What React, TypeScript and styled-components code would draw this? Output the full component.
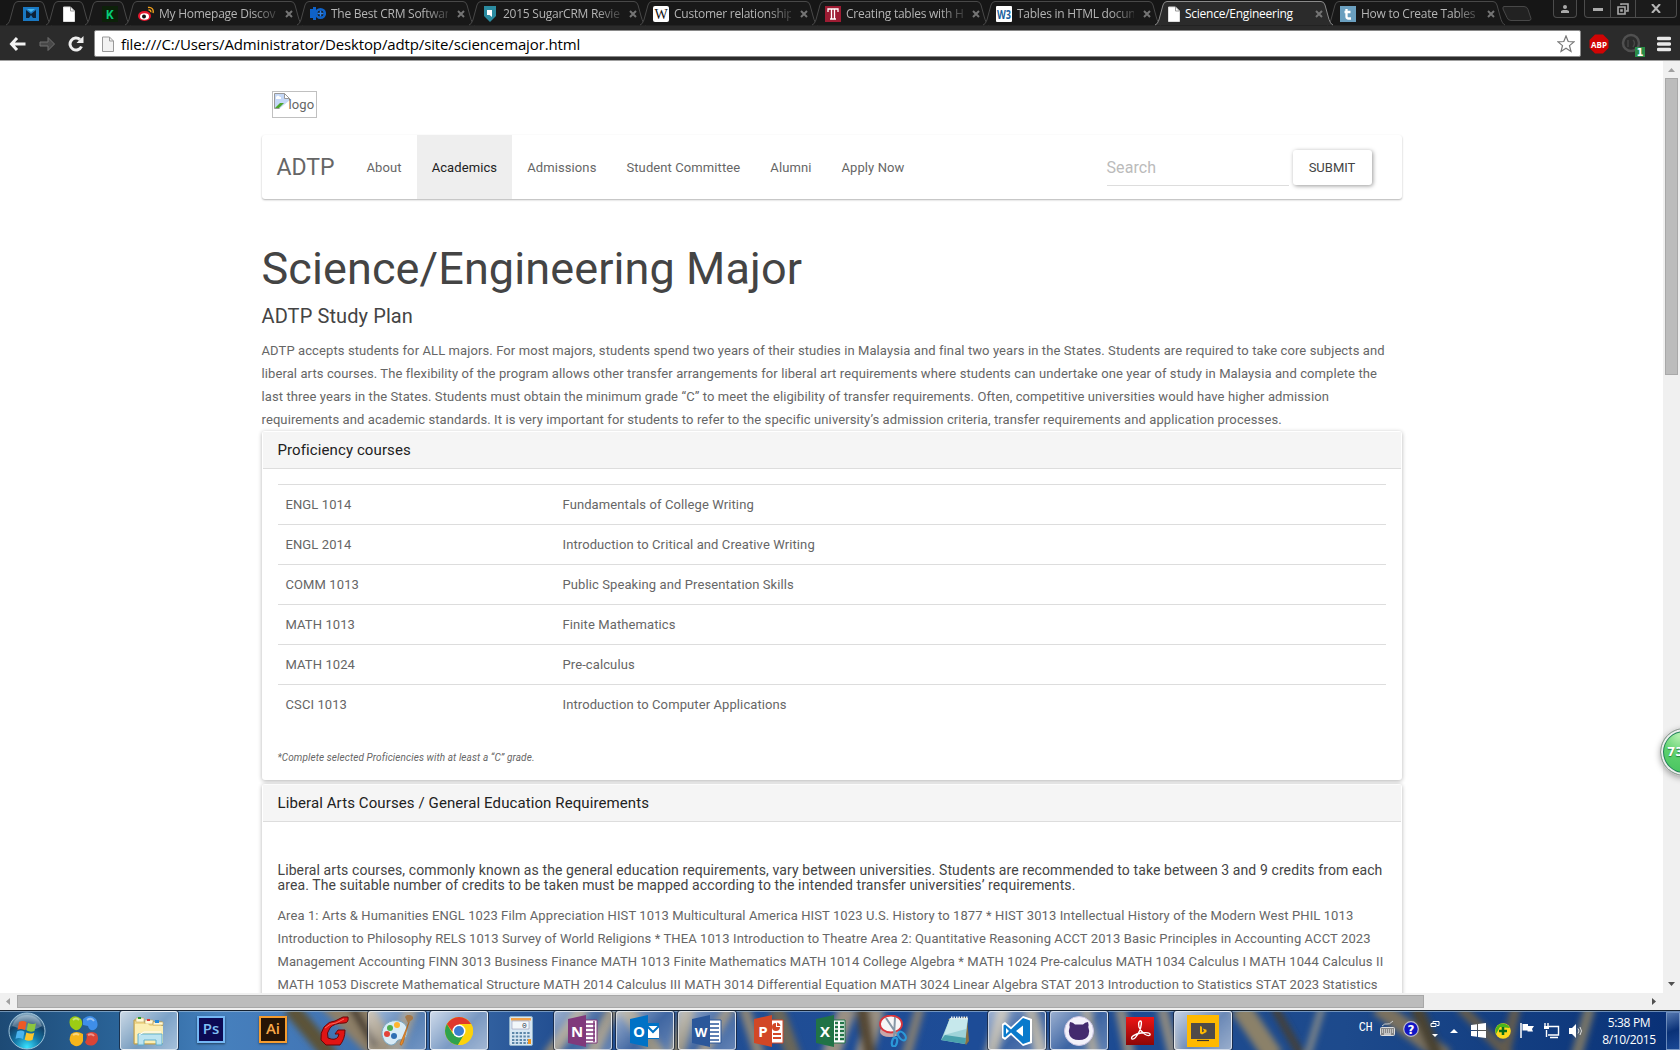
import React from "react";
import styled, { createGlobalStyle, css } from "styled-components";

const ui = `"Open Sans", "Noto Sans", sans-serif`;

const GlobalStyle = createGlobalStyle`
  * { box-sizing: border-box; }
  body { margin: 0; overflow: hidden; background: #fff; }
  svg { display: block; }
`;

const Desktop = styled.div`
  width: 1680px;
  height: 1050px;
  display: flex;
  flex-direction: column;
  overflow: hidden;
  position: relative;
  font-family: Roboto, sans-serif;
`;

/* ---------- browser frame ---------- */

const TabStrip = styled.div`
  height: 25px;
  flex: none;
  display: flex;
  background: #161616;
  padding-left: 8px;
`;

const TabBox = styled.div<{ $w: number; $active?: boolean }>`
  width: ${(p) => p.$w}px;
  height: 25px;
  flex: none;
  position: relative;
  display: flex;
  align-items: center;
  padding: 2px 0 0 ${(p) => (p.$w < 60 ? 15 : 11)}px;
  gap: 5px;
  z-index: ${(p) => (p.$active ? 2 : 1)};
  font-family: ${ui};
  font-size: 12px;
  color: ${(p) => (p.$active ? "#fff" : "#b4b4b4")};
  & > * { position: relative; flex: none; }
`;

const TabShape = styled.svg`
  && { position: absolute; left: -1px; top: 0; overflow: visible; }
`;

const TabTitle = styled.span<{ $w: number; $ls: number; $fade: boolean }>`
  width: ${(p) => p.$w}px;
  overflow: hidden;
  white-space: nowrap;
  line-height: 18px;
  letter-spacing: ${(p) => p.$ls}px;
  ${(p) => p.$fade && css`mask-image: linear-gradient(90deg, #000 80%, rgba(0, 0, 0, 0.25));`}
`;

const TabClose = styled.svg`
  margin-left: 4px;
`;

const WindowButtons = styled.div<{ $ml: number }>`
  display: flex;
  height: 18px;
  margin-left: ${(p) => p.$ml}px;
  border: 1px solid #4c4c4c;
  border-top: 0;
  border-radius: 0 0 4px 4px;
  background: #1b1b1b;
`;

const WindowButton = styled.div<{ $w: number }>`
  width: ${(p) => p.$w}px;
  display: flex;
  justify-content: center;
  align-items: center;
  & + & { border-left: 1px solid #4c4c4c; }
`;

const Toolbar = styled.div`
  height: 36px;
  flex: none;
  display: flex;
  align-items: center;
  background: #2b2b2b;
  border-top: 1px solid #222;
  border-bottom: 1px solid #a0a0a0;
  padding: 1px 8px 0 9px;
`;

const NavIcon = styled.svg<{ $mr: number }>`
  margin-right: ${(p) => p.$mr}px;
  flex: none;
`;

const Omnibox = styled.div`
  width: 1487px;
  height: 27px;
  flex: none;
  display: flex;
  align-items: center;
  background: #fff;
  border: 1px solid #8a8a8a;
  border-radius: 2px;
  padding: 0 5px 0 7px;
  gap: 7px;
`;

const Url = styled.span`
  flex: 1;
  font: 15px/24px ${ui};
  letter-spacing: -0.13px;
  color: #000;
`;

const Extension = styled.div<{ $ml: number }>`
  margin-left: ${(p) => p.$ml}px;
  flex: none;
`;

/* ---------- viewport ---------- */

const ViewRow = styled.div`
  height: 932px;
  flex: none;
  display: flex;
`;

const Page = styled.main`
  width: 1663px;
  height: 932px;
  overflow: hidden;
  background: #fff;
  font-size: 13px;
  line-height: 23px;
  letter-spacing: 0.1px;
  color: #666;
`;

const Container = styled.div`
  width: 1140px;
  margin: 0 auto;
  padding-top: 30px;
`;

const BrokenImage = styled.div`
  width: 45px;
  height: 27px;
  margin-left: 10px;
  border: 1px solid #c0c0c0;
  display: flex;
  padding: 1px;
  overflow: hidden;
  span { line-height: 23px; margin-left: -1px; }
`;

const Navbar = styled.nav`
  height: 64px;
  margin-top: 17px;
  display: flex;
  align-items: stretch;
  border-radius: 3px;
  box-shadow: 0 1px 2px rgba(0, 0, 0, 0.3);
  padding-left: 15px;
  line-height: 65px;
`;

const Brand = styled.span`
  font-size: 23px;
  width: 75px;
  letter-spacing: 0;
`;

const NavLink = styled.span<{ $active?: boolean }>`
  padding: 0 15px;
  ${(p) => p.$active && css`background: #eee; color: #212121;`}
`;

const SearchForm = styled.form`
  display: flex;
  margin: 14px 30px 0 auto;
  gap: 4px;
`;

const SearchInput = styled.div`
  width: 182px;
  height: 37px;
  line-height: 38px;
  font-size: 16px;
  color: #bbb;
  box-shadow: inset 0 -1px 0 #ddd;
`;

const SubmitButton = styled.div`
  width: 79px;
  height: 35px;
  margin-top: 1px;
  line-height: 35px;
  text-align: center;
  color: #444;
  border-radius: 3px;
  letter-spacing: 0;
  box-shadow: 1px 1px 4px rgba(0, 0, 0, 0.4);
`;

const Title = styled.h1`
  margin: 45px 0 0;
  font-weight: 400;
  font-size: 45px;
  line-height: 50px;
  letter-spacing: 0.1px;
  color: #444;
`;

const Subtitle = styled.h2`
  margin: 11px 0 0;
  font-weight: 400;
  font-size: 20px;
  line-height: 23px;
  color: #444;
`;

const Lines = styled.p<{ $mt: number }>`
  margin: ${(p) => p.$mt}px 0 0;
  white-space: pre;
`;

const Panel = styled.section<{ $h: number; $mb: number }>`
  height: ${(p) => p.$h}px;
  margin-bottom: ${(p) => p.$mb}px;
  border: 1px solid transparent;
  border-radius: 3px;
  box-shadow: 0 1px 4px rgba(0, 0, 0, 0.3);
`;

const PanelHead = styled.h3`
  margin: 0;
  height: 37px;
  padding-left: 15px;
  background: #f5f5f5;
  border-bottom: 1px solid #ddd;
  font-size: 15px;
  font-weight: 400;
  line-height: 36px;
  color: #212121;
`;

const PanelBody = styled.div`
  padding: 15px;
`;

const Table = styled.table`
  width: 100%;
  table-layout: fixed;
  border-collapse: collapse;
  margin-bottom: 24px;
  td { border-top: 1px solid #ddd; padding: 8px; height: 40px; line-height: 23px; }
  td:first-child { width: 25%; }
`;

const Note = styled.em`
  display: block;
  font-size: 10px;
  line-height: 18px;
`;

const Lead = styled.p`
  margin: 26px 0 11px;
  font-size: 14px;
  line-height: 15px;
  color: #444;
  white-space: pre;
`;

const VScroll = styled.div`
  width: 17px;
  background: #f0f0f0;
  display: flex;
  flex-direction: column;
  align-items: center;
`;

const VThumb = styled.div`
  width: 13px;
  height: 297px;
  margin-bottom: auto;
  background: #bcbcbc;
  border: 1px solid #a8a8a8;
`;

const HScroll = styled.div`
  height: 17px;
  flex: none;
  background: #f0f0f0;
  display: flex;
  align-items: center;
`;

const HThumb = styled.div`
  width: 1407px;
  height: 13px;
  background: #bcbcbc;
  border: 1px solid #a8a8a8;
`;

const Arrow = styled.svg<{ $m: string }>`
  flex: none;
  margin: ${(p) => p.$m};
`;

const SpeedBall = styled.div`
  position: absolute;
  left: 1660px;
  top: 728px;
  width: 48px;
  height: 48px;
  border-radius: 50%;
  border: 1px solid #999;
  background: radial-gradient(circle at 40% 15%, #b5efb0 0, #5bd06c 40%, #3fbd5a 100%);
  box-shadow: inset 0 0 0 2px #eee, inset 0 0 0 3px #23805a, 0 2px 6px rgba(0, 0, 0, 0.35);
  color: #fff;
  font: bold 12px/46px "DejaVu Sans", sans-serif;
  padding-left: 6px;
  text-shadow: 0 1px 1px #267a3c;
`;

/* ---------- taskbar ---------- */

const Taskbar = styled.div`
  height: 40px;
  flex: none;
  position: relative;
  display: flex;
  background: #24518f;
  overflow: hidden;
  border-top: 1px solid #14202e;
  & > * { position: relative; flex: none; }
`;

const Wallpaper = styled.svg`
  && { position: absolute; left: 0; top: 0; }
`;

const Start = styled.div`
  width: 58px;
  padding: 1px 0 0 8px;
`;

const Slot = styled.div<{ $open?: boolean; $bright?: boolean; $shift?: number }>`
  width: 58px;
  height: 39px;
  margin-right: 4px;
  display: flex;
  align-items: center;
  justify-content: center;
  padding-right: ${(p) => p.$shift || 0}px;
  border: 1px solid transparent;
  ${(p) =>
    p.$open &&
    css`
      border-color: rgba(255, 255, 255, 0.65);
      border-radius: 3px;
      box-shadow: 0 0 0 1px rgba(20, 30, 50, 0.7);
      background: ${p.$bright
        ? "linear-gradient(135deg, rgba(255,255,255,.75), rgba(255,255,255,.35) 55%, rgba(255,255,255,.55))"
        : "linear-gradient(135deg, rgba(255,255,255,.55), rgba(255,255,255,.14) 55%, rgba(255,255,255,.3))"};
    `}
`;

const AdobeTile = styled.div<{ $edge: string; $bg: string; $fg: string }>`
  width: 28px;
  height: 27px;
  border: 2px solid ${(p) => p.$edge};
  background: ${(p) => p.$bg};
  color: ${(p) => p.$fg};
  font: 600 15px/21px ${ui};
  text-align: center;
  margin-bottom: 3px;
  box-shadow: 0 1px 2px rgba(0, 0, 0, 0.5);
`;

const Tray = styled.div`
  display: flex;
  align-items: center;
  margin-left: auto;
  height: 39px;
  color: #fff;
`;

const Lang = styled.span`
  font: 12px/14px "Liberation Mono", monospace;
  letter-spacing: -0.6px;
  margin: 0 8px 5px 0;
`;

const TrayIcon = styled.svg<{ $mr: number; $mb?: number }>`
  margin-right: ${(p) => p.$mr}px;
  margin-bottom: ${(p) => p.$mb || 0}px;
  overflow: visible;
`;

const Clock = styled.div`
  width: 60px;
  font: 12px/17px ${ui};
  letter-spacing: -0.35px;
  text-align: center;
  margin-right: 7px;
  white-space: nowrap;
`;

const ShowDesktop = styled.div`
  width: 14px;
  height: 38px;
  border: 1px solid rgba(160, 185, 220, 0.6);
  background: linear-gradient(160deg, rgba(160, 190, 230, 0.5), rgba(10, 50, 120, 0.5) 50%, rgba(40, 90, 170, 0.6));
`;

/* ---------- drawings ---------- */

const PageGlyph = ({ dim }: { dim?: boolean }) => (
  <svg width="12" height="16" viewBox="0 0 12 16">
    <path d="M.5 1h7L11.500 5v10.500H.5z" fill={dim ? "#f2f2f2" : "#fff"} stroke={dim ? "#999" : "#ddd"} />
    <path d="M7.500 1v4h4" fill="none" stroke="#999" />
  </svg>
);

const Favicon = ({ kind }: { kind: string }) => {
  if (kind === "file") return <PageGlyph />;
  return (
    <svg width="16" height="16" viewBox="0 0 16 16">
      {kind === "m" && (
        <>
          <path d="M0 1h16v14H0z" fill="#1a78c2" />
          <path d="M3 4l5 4 5-4v8H10l-2-3-2 3H3z" fill="#0d2137" />
          <path d="M4 3h8L8 6z" fill="#49b8ee" />
        </>
      )}
      {kind === "k" && (
        <>
          <path d="M0 0h16v16H0z" fill="#0c2109" />
          <text x="4" y="12.500" fontSize="12" fontWeight="bold" fontFamily="Roboto" fill="#05ce78">K</text>
        </>
      )}
      {kind === "weibo" && (
        <>
          <ellipse cx="6.500" cy="10" rx="6.500" ry="5" fill="#e6162d" />
          <ellipse cx="6.500" cy="10.500" rx="4.500" ry="3.300" fill="#fff" />
          <circle cx="6" cy="10.500" r="2" fill="#111" />
          <path d="M10 1.500c3.500-.8 6 2 5 5.500M10.500 4c1.600-.3 2.600.8 2.200 2.300" fill="none" stroke="#f5a21b" strokeWidth="1.400" />
        </>
      )}
      {kind === "ten" && (
        <>
          <path d="M0 3h3v9h-3zM3 1h3v13H3z" fill="#0f62c8" />
          <circle cx="10.500" cy="7.500" r="4.300" fill="none" stroke="#0f62c8" strokeWidth="2.600" />
          <path d="M10.500 4.500v6M7.500 7.500h6" stroke="#2f82e8" strokeWidth="1.500" />
        </>
      )}
      {kind === "shield" && (
        <>
          <path d="M2 0h12v10l-6 6-6-6z" fill="#2b8ba0" />
          <path d="M5 4h5v7L7.500 9H5z" fill="#fff" />
        </>
      )}
      {kind === "wiki" && (
        <>
          <rect width="16" height="16" rx="2" fill="#fff" />
          <text x="8" y="13" fontSize="14" textAnchor="middle" fontFamily="Liberation Serif" fill="#111">W</text>
        </>
      )}
      {kind === "temple" && (
        <>
          <path d="M0 0h16v16H0z" fill="#9d1c33" />
          <path d="M3 6V3h10v3M6.500 3.500v9M9.500 3.500v9M5 13h6" fill="none" stroke="#fff" strokeWidth="1.300" />
        </>
      )}
      {kind === "w3" && (
        <>
          <rect width="16" height="16" rx="1" fill="#fff" />
          <text x="8" y="12.500" fontSize="12" textAnchor="middle" fontWeight="bold" fontFamily="Open Sans" textLength="14" lengthAdjust="spacingAndGlyphs" fill="#1b5f9e">W3</text>
        </>
      )}
      {kind === "t" && (
        <>
          <path d="M0 0h16v16H0z" fill="#6a9fbf" />
          <path d="M6.500 3v7.500q0 2 2 2h2.500M4.500 6h6" fill="none" stroke="#fff" strokeWidth="2.300" />
        </>
      )}
    </svg>
  );
};

type TabInfo = { w: number; icon: string; title?: string; tw?: number; ls?: number; active?: boolean };
const tabs: TabInfo[] = [
  { w: 40, icon: "m" },
  { w: 39, icon: "file" },
  { w: 40, icon: "k" },
  { w: 172, icon: "weibo", title: "My Homepage Discov" },
  { w: 172, icon: "ten", title: "The Best CRM Softwar" },
  { w: 171, icon: "shield", title: "2015 SugarCRM Revie" },
  { w: 172, icon: "wiki", title: "Customer relationship" },
  { w: 171, icon: "temple", title: "Creating tables with H" },
  { w: 172, icon: "w3", title: "Tables in HTML docun" },
  { w: 172, icon: "file", title: "Science/Engineering", active: true },
  { w: 172, icon: "t", title: "How to Create Tables" },
];

const Tab = ({ t }: { t: TabInfo }) => (
  <TabBox $w={t.w} $active={t.active}>
    <TabShape width={t.w + 5} height="26">
      <path
        d={`M-1 25C2 24 3 20 4 16L7 5Q8 1.500 11 1.500H${t.w - 7}Q${t.w - 4} 1.500 ${t.w - 3} 5L${t.w} 16Q${t.w + 2} 24 ${t.w + 5} 25`}
        fill={t.active ? "#2b2b2b" : "#181818"}
        stroke={t.active ? "#8a8a8a" : "#484848"}
      />
    </TabShape>
    <Favicon kind={t.icon} />
    {t.title && (
      <>
        <TabTitle $w={t.icon === "file" ? 121 : 117} $ls={-0.25} $fade={!t.active}>{t.title}</TabTitle>
        <TabClose width="8" height="8" viewBox="0 0 8 8">
          <path d="M1 1l6 6M7 1L1 7" stroke="#747474" strokeWidth="2" />
        </TabClose>
      </>
    )}
  </TabBox>
);

const officeColors: Record<string, string> = { N: "#80397b", O: "#0072c6", W: "#2b579a", P: "#d24726", X: "#217346" };

const Office = ({ letter }: { letter: string }) => {
  const c = officeColors[letter];
  return (
    <svg width="30" height="32" viewBox="0 0 30 32">
      {letter === "O" ? (
        <>
          <path d="M16 8h13v16H16z" fill="#0072c6" />
          <path d="M17 11h12v12H17z" fill="#fff" />
          <path d="M17 11l6 6 6-6" fill="none" stroke="#0072c6" strokeWidth="2" />
        </>
      ) : (
        <>
          <path d="M16 5h13v23H16z" fill="#fff" stroke={c} />
          {letter === "X" ? (
            <path d="M19 8h3M24 8h4M19 12h3M24 12h4M19 16h3M24 16h4M19 20h3M24 20h4M19 24h3M24 24h4" stroke={c} strokeWidth="2.500" />
          ) : letter === "P" ? (
            <>
              <circle cx="22" cy="12" r="4" fill={c} />
              <path d="M22 12V7h5v5z" fill="#fff" />
              <path d="M23 11V7.500q3 .5 3.500 3.500z" fill={c} />
              <path d="M19 19h8M19 23h8" stroke={c} strokeWidth="1.800" />
            </>
          ) : (
            <path d="M18 9h9M18 13h9M18 17h9M18 21h9M18 25h9" stroke={c} strokeWidth="1.600" />
          )}
          {letter === "N" && <path d="M26 6v21" stroke={c} strokeWidth="1.500" />}
        </>
      )}
      <path d="M0 4l18-4v32L0 28z" fill={c} />
      <text x="9" y="21.500" textAnchor="middle" fontFamily="Open Sans" fontWeight="bold" fontSize={letter === "W" ? 13 : 15} fill="#fff">{letter}</text>
    </svg>
  );
};

const StartOrb = () => (
  <svg width="38" height="38" viewBox="0 0 38 38">
    <defs>
      <radialGradient id="orb" cx=".5" cy=".95" r=".9">
        <stop offset="0" stopColor="#39e3ff" />
        <stop offset=".4" stopColor="#1478a8" />
        <stop offset=".75" stopColor="#123f66" />
        <stop offset="1" stopColor="#7ea3bd" />
      </radialGradient>
    </defs>
    <circle cx="19" cy="19" r="18" fill="url(#orb)" stroke="#9fc4da" />
    <path d="M4 14Q8 3 19 3t15 11Q26 19 19 18T4 14z" fill="#fff" opacity=".28" />
    <path d="M11 10q4-2 7.500.3L17 18q-4-2-7.500-.3z" fill="#ee5a24" />
    <path d="M20 11q4 2 8 .2L26.500 19q-4 1.500-7.800-.4z" fill="#8cc63f" />
    <path d="M9 19.500q4-2 7.500.2L15 27q-4-2-7.500-.3z" fill="#4ab4ee" />
    <path d="M18.300 20.500q4 2 8 .2L24.500 28q-4 1.800-7.800-.3z" fill="#fbc52c" />
  </svg>
);

const Balls = () => (
  <svg width="30" height="32" viewBox="0 0 30 32">
    <path d="M1 4Q4 0 9 2t4 8q-2 6-7 5Q-1 12 1 4z" fill="#9ccc14" />
    <path d="M14 4q7-6 13 0 4 8-2 11-5 1-6-4l-5-1z" fill="#3f8ee8" />
    <path d="M2 19q5-4 12 0v7q-2 6-8 5-8-3-4-12z" fill="#f5b51b" />
    <path d="M17 19q6-4 11 0 3 7-3 11-7 2-9-3 3-4 1-8z" fill="#d94436" />
    <path d="M4 5q3-3 6 0M18 5q4-3 7 1M4 20q3-2 6 0M19 20q4-2 6 1" stroke="#fff" opacity=".45" strokeWidth="2" fill="none" />
  </svg>
);

const Explorer = () => (
  <svg width="34" height="32" viewBox="0 0 34 32">
    <path d="M2 5h8l2 2h18v22H2z" fill="#f0d78a" stroke="#b99a48" />
    <path d="M4 3h8v4H4zM13 5h8v4h-8zM21 7h10v3H21z" fill="#fff8d8" stroke="#c2a95c" strokeWidth=".6" />
    <path d="M6 2h3v2H6z" fill="#2b9a2b" /><path d="M15 4h3v2h-3z" fill="#d33" /><path d="M23 5h4v3h-4z" fill="#2588d9" />
    <path d="M3 9h13l2 2h13v17H3z" fill="#fbeeb4" />
    <path d="M6 19h24v11h-6v-5H12v5H6z" fill="#b9e4f5" stroke="#5aaed0" opacity=".95" />
    <path d="M7 20l5-3h17" stroke="#fff" fill="none" />
  </svg>
);

const GIcon = () => (
  <svg width="30" height="32" viewBox="0 0 30 32">
    <path d="M4 12Q9 6 15 6l8-4h5q1 6-4 6-10 0-14 5-4 5-2 10 7 3 10-1l1-3h-4l3-4h7q0 9-5 15H6L1 25q-1-7 3-13z" fill="#e01414" stroke="#6b0505" />
    <path d="M5 13q5-5 11-5l8-4" stroke="#ff6a5a" fill="none" />
  </svg>
);

const Paint = () => (
  <svg width="32" height="32" viewBox="0 0 32 32">
    <path d="M1 20C0 10 9 4 18 6c8 2 10 9 7 16-2 4-6 1-9 4-2 4-6 5-9 3-3-1-5-5-6-9z" fill="#d8ebf6" stroke="#7aa8c4" />
    <circle cx="9" cy="13" r="3" fill="#4caf50" /><circle cx="16" cy="10" r="3" fill="#ffb52e" />
    <circle cx="6" cy="19" r="3" fill="#e3433a" /><circle cx="13" cy="21" r="3" fill="#2f6fb4" />
    <path d="M28 7l-6 21q-2 4-3 1z" fill="#e88a2a" stroke="#a85a10" strokeWidth=".6" />
    <path d="M24 2q2-3 5-2 4 1 3 4l-5 4z" fill="#a5794a" />
  </svg>
);

const ChromeIcon = () => (
  <svg width="30" height="30" viewBox="0 0 30 30">
    <circle cx="15" cy="15" r="14" fill="#fcd20b" />
    <path d="M2.900 8A14 14 0 0 1 27.100 8L15 8z" fill="#e0382c" />
    <path d="M2.900 8A14 14 0 0 0 14 29l6.500-11L9 18z" fill="#2fa24c" />
    <path d="M2.900 8h12.100v7H8z" fill="#e0382c" />
    <path d="M27.100 8A14 14 0 0 1 14 29l7-12V8z" fill="#fcd20b" />
    <circle cx="15" cy="15" r="6.500" fill="#fff" /><circle cx="15" cy="15" r="5" fill="#3b7ed0" />
  </svg>
);

const Calculator = () => (
  <svg width="24" height="30" viewBox="0 0 24 30">
    <rect x=".5" y=".5" width="23" height="29" rx="1.500" fill="#d6e6f2" stroke="#8fb0c8" />
    <path d="M2 2h20v2.500H2z" fill="#efa14a" />
    <path d="M3 5h17v8H3z" fill="#f2f7fa" stroke="#88a" strokeWidth=".5" />
    <text x="13" y="12" fontFamily="Liberation Mono" fontSize="8" fill="#345">0</text>
    <path d="M3 17h18M3 20.500h18M3 24h18M3 27h18" stroke="#5b86a8" strokeWidth="2.200" strokeDasharray="2.400 1.400" />
    <path d="M19 23h3v5h-3z" fill="#f0961e" />
  </svg>
);

const Snip = () => (
  <svg width="30" height="32" viewBox="0 0 30 32">
    <path d="M2 17q0-5 6-6l14 6q-2 5-10 5-9 0-10-5z" fill="#c9a6a8" />
    <ellipse cx="13" cy="9" rx="11" ry="8.500" fill="#f7f7f7" stroke="#d8353c" strokeWidth="1.800" />
    <path d="M8 3l12 18M17 2l-1 20" stroke="#8797a5" strokeWidth="2" />
    <ellipse cx="24" cy="21" rx="3" ry="5" fill="none" stroke="#2b98d8" strokeWidth="2.200" transform="rotate(-38 24 21)" />
    <ellipse cx="16.500" cy="27" rx="2.500" ry="4.500" fill="none" stroke="#2b98d8" strokeWidth="2.200" transform="rotate(12 16.500 27)" />
  </svg>
);

const Notepad = () => (
  <svg width="30" height="32" viewBox="0 0 30 32">
    <path d="M8 4l19-2 2 24-3 4z" fill="#8a7040" />
    <path d="M10 3h18l-3 26L1 25z" fill="#9fd3d9" />
    <path d="M10 3h18L26 14 4 20z" fill="#c6e8ec" />
    <path d="M5 20l21 3-1 6-24-4z" fill="#4aa2ad" />
    <path d="M11 3h17" stroke="#e8eef0" strokeWidth="3" strokeDasharray="1.500 1" />
  </svg>
);

const VSCode = () => (
  <svg width="32" height="32" viewBox="0 0 32 32">
    <path d="M22 1l9 3v24l-9 3L10 20l-6 5-3-2V9l3-2 6 5z" fill="#fff" />
    <path d="M22 3l7 2.500v21L22 29 10 17.500 4 22.500l-1.500-1V10.500L4 9.500l6 5zM22 10.500L15 16l7 5.500zM5 13v6l3-3z" fill="#0a7acc" fillRule="evenodd" />
  </svg>
);

const GitHub = () => (
  <svg width="30" height="32" viewBox="0 0 30 32">
    <circle cx="15" cy="16" r="14.500" fill="#f3f1fa" stroke="#c9c4e2" />
    <path d="M6 7q3 0 5 2.500h8Q21 7 24 7q1 3 .3 5 1.700 4 .2 8-2 5-9.500 5t-9.500-5q-1.500-4 .2-8Q5 10 6 7z" fill="#432a6e" />
  </svg>
);

const Acrobat = () => (
  <svg width="28" height="28" viewBox="0 0 28 28">
    <defs><linearGradient id="acro" x1="0" y1="0" x2="0" y2="1"><stop offset="0" stopColor="#ee1414" /><stop offset="1" stopColor="#8c0606" /></linearGradient></defs>
    <path d="M0 0h28v28H0z" fill="url(#acro)" />
    <path d="M6 22c-2-2 3-5 9-6 6-1 10 0 9 2-2 2-9-2-11-8-1-4 0-6 1.500-6s1 5-1 10c-2 4-5 9-7.500 8z" fill="none" stroke="#fff" strokeWidth="1.400" />
  </svg>
);

const BingDesktop = () => (
  <svg width="32" height="32" viewBox="0 0 32 32">
    <path d="M0 0h32v32H0z" fill="#ffb900" />
    <path d="M4 8h24v16H4z" fill="#4f4a48" />
    <path d="M10 25.500h12" stroke="#3a3430" strokeWidth="1.200" />
    <path d="M13 11l2 .7v5.500l2.200-1-1.500-2.800 3.800 1.400V17L15 19.500l-2-1.200z" fill="#ffb900" />
  </svg>
);

const Scene = () => (
  <Wallpaper width="1680" height="40" viewBox="0 0 1680 40" preserveAspectRatio="none">
    <defs>
      <linearGradient id="sky">
        <stop offset="0" stopColor="#1d4a75" /><stop offset=".08" stopColor="#2c679d" />
        <stop offset=".13" stopColor="#4680bd" /><stop offset=".19" stopColor="#4276b6" />
        <stop offset=".29" stopColor="#31609f" /><stop offset=".33" stopColor="#234f92" />
        <stop offset=".58" stopColor="#1d4c97" /><stop offset=".8" stopColor="#1d4a8c" />
        <stop offset=".95" stopColor="#0e387c" /><stop offset="1" stopColor="#082f76" />
      </linearGradient>
      <filter id="soft" x="-5%" y="-50%" width="110%" height="200%"><feGaussianBlur stdDeviation="3" /></filter>
    </defs>
    <path d="M0 0h1680v40H0z" fill="url(#sky)" />
    <g filter="url(#soft)" fill="none">
      <path d="M290-4l42 50" stroke="#5c5238" strokeWidth="16" />
      <path d="M318-6h54l34 54h-34z" fill="#8d7f68" />
      <path d="M352-4l24 40" stroke="#463c30" strokeWidth="8" />
      <path d="M392 46l20-50" stroke="#8d8a80" strokeWidth="14" />
      <path d="M548 46l36-50M590 46l24-50" stroke="#8b8577" strokeWidth="13" />
      <path d="M624-4l36 50M676 46l12-50" stroke="#7d7765" strokeWidth="15" />
      <path d="M700 46l30-50M744-4l16 50" stroke="#8a8478" strokeWidth="11" />
      <path d="M776-4l18 50" stroke="#6b6658" strokeWidth="15" />
      <path d="M830 46l18-50M876-4l-12 50" stroke="#999083" strokeWidth="18" />
      <path d="M862-4l8 50" stroke="#574a34" strokeWidth="13" />
      <path d="M906 46l14-50" stroke="#7f7b74" strokeWidth="10" />
      <path d="M990 46l14-50M1030-4l12 50" stroke="#9d9b94" strokeWidth="13" />
      <path d="M1094 46l-8-50M1120-4l10 50M1162-4l12 50" stroke="#8a8881" strokeWidth="11" />
      <path d="M1240-4l34 50" stroke="#8b8169" strokeWidth="20" />
      <path d="M1274-4l28 50" stroke="#443f38" strokeWidth="8" />
      <path d="M1322-4l-15 50" stroke="#7e8588" strokeWidth="7" />
      <path d="M1378-4l68 50" stroke="#7a715f" strokeWidth="17" />
      <path d="M1416-4l22 50" stroke="#4a4333" strokeWidth="13" />
      <path d="M1460-4l50 50M1504 46l12-50" stroke="#635b4d" strokeWidth="10" />
      <path d="M1576 46l14-50" stroke="#777468" strokeWidth="11" />
    </g>
    <path d="M0 .5h1680" stroke="#a9c4dd" opacity=".6" />
  </Wallpaper>
);

const courses = [
  ["ENGL 1014", "Fundamentals of College Writing"],
  ["ENGL 2014", "Introduction to Critical and Creative Writing"],
  ["COMM 1013", "Public Speaking and Presentation Skills"],
  ["MATH 1013", "Finite Mathematics"],
  ["MATH 1024", "Pre-calculus"],
  ["CSCI 1013", "Introduction to Computer Applications"],
];

const intro = [
  "ADTP accepts students for ALL majors. For most majors, students spend two years of their studies in Malaysia and final two years in the States. Students are required to take core subjects and",
  "liberal arts courses. The flexibility of the program allows other transfer arrangements for liberal art requirements where students can undertake one year of study in Malaysia and complete the",
  "last three years in the States. Students must obtain the minimum grade “C” to meet the eligibility of transfer requirements. Often, competitive universities would have higher admission",
  "requirements and academic standards. It is very important for students to refer to the specific university’s admission criteria, transfer requirements and application processes.",
].join("\n");

const lead = [
  "Liberal arts courses, commonly known as the general education requirements, vary between universities. Students are recommended to take between 3 and 9 credits from each",
  "area. The suitable number of credits to be taken must be mapped according to the intended transfer universities’ requirements.",
].join("\n");

const areas = [
  "Area 1: Arts & Humanities ENGL 1023 Film Appreciation HIST 1013 Multicultural America HIST 1023 U.S. History to 1877 * HIST 3013 Intellectual History of the Modern West PHIL 1013",
  "Introduction to Philosophy RELS 1013 Survey of World Religions * THEA 1013 Introduction to Theatre Area 2: Quantitative Reasoning ACCT 2013 Basic Principles in Accounting ACCT 2023",
  "Management Accounting FINN 3013 Business Finance MATH 1013 Finite Mathematics MATH 1014 College Algebra * MATH 1024 Pre-calculus MATH 1034 Calculus I MATH 1044 Calculus II",
  "MATH 1053 Discrete Mathematical Structure MATH 2014 Calculus III MATH 3014 Differential Equation MATH 3024 Linear Algebra STAT 2013 Introduction to Statistics STAT 2023 Statistics",
  "for Engineering STAT 2034 Probability and Statistics Area 3: Science & Technology BIOL 1013 General Biology BIOL 1033 Introduction to Cell Biology BIOL 1053 Evolution, Diversity & Ecology",
].join("\n");

export default function App() {
  return (
    <Desktop>
      <GlobalStyle />
      <TabStrip>
        {tabs.map((t, i) => <Tab key={i} t={t} />)}
        <svg width="32" height="24" viewBox="0 0 32 24">
          <path d="M3 6.500h20q3 0 4 3l3 9q0 2-2 2H10q-3 0-4-3L2 9q-.500-2.500 1-2.500z" fill="#222" stroke="#484848" />
        </svg>
        <WindowButtons $ml={20}>
          <WindowButton $w={22}>
            <svg width="8" height="10" viewBox="0 0 8 10"><circle cx="4" cy="3" r="2" fill="#aaa" /><path d="M0 9V7l2-1h4l2 1v2z" fill="#aaa" /></svg>
          </WindowButton>
        </WindowButtons>
        <WindowButtons $ml={7}>
          <WindowButton $w={25}><svg width="10" height="4"><path d="M0 1h10v3H0z" fill="#aaa" /></svg></WindowButton>
          <WindowButton $w={25}>
            <svg width="12" height="12" viewBox="0 0 12 12"><path d="M4 2V1h7v7h-2M1 4h7v7H1zM4 7h1v1H4z" fill="none" stroke="#aaa" strokeWidth="1.600" /></svg>
          </WindowButton>
          <WindowButton $w={41}><svg width="10" height="9" viewBox="0 0 10 9"><path d="M1 0l8 9M9 0L1 9" stroke="#b5b5b5" strokeWidth="2" /></svg></WindowButton>
        </WindowButtons>
      </TabStrip>

      <Toolbar>
        <NavIcon $mr={13} width="17" height="16" viewBox="0 0 17 16"><path d="M8 2L2.500 8 8 14M3 8h13.500" fill="none" stroke="#f2f2f2" strokeWidth="3" /></NavIcon>
        <NavIcon $mr={12} width="17" height="16" viewBox="0 0 17 16"><path d="M9 1.500V6H1v4h8v4.500L15.500 8z" fill="#484848" stroke="#707070" /></NavIcon>
        <NavIcon $mr={10} width="16" height="16" viewBox="0 0 16 16"><path d="M13.500 10.500A6 6 0 1 1 12 3.500" fill="none" stroke="#eee" strokeWidth="3" /><path d="M15.500 0v7H8.500z" fill="#eee" /></NavIcon>
        <Omnibox>
          <PageGlyph dim />
          <Url>file:///C:/Users/Administrator/Desktop/adtp/site/sciencemajor.html</Url>
          <svg width="18" height="18" viewBox="0 0 18 18"><path d="M9 1l2.200 5.500 5.800.4-4.500 3.700 1.500 5.900L9 13.300l-5 3.200 1.500-5.900L1 6.900l5.800-.4z" fill="#fff" stroke="#777" strokeWidth="1.200" /></svg>
        </Omnibox>
        <Extension $ml={8}>
          <svg width="20" height="20" viewBox="0 0 20 20">
            <path d="M6 .5h8L19.500 6v8L14 19.500H6L.5 14V6z" fill="#d00404" />
            <text x="10" y="13.500" textAnchor="middle" fontFamily="Open Sans" fontWeight="bold" fontSize="9" textLength="16" lengthAdjust="spacingAndGlyphs" fill="#fff">ABP</text>
          </svg>
        </Extension>
        <Extension $ml={12}>
          <svg width="25" height="28" viewBox="0 0 25 28">
            <circle cx="10" cy="13" r="8" fill="none" stroke="#505050" strokeWidth="2.500" />
            <path d="M7 10v7M12 10q3 3 0 7" stroke="#464646" fill="none" strokeWidth="1.500" />
            <path d="M14 17h10v10H14z" fill="#2a8c48" />
            <text x="19" y="26" textAnchor="middle" fontFamily="DejaVu Sans" fontWeight="bold" fontSize="10" fill="#fff">1</text>
          </svg>
        </Extension>
        <Extension $ml={11}>
          <svg width="14" height="16" viewBox="0 0 14 16"><path d="M1.500 2.500h11M1.500 8h11M1.500 13.500h11" stroke="#e8e8e8" strokeWidth="3.400" strokeLinecap="round" /></svg>
        </Extension>
      </Toolbar>

      <ViewRow>
        <Page>
          <Container>
            <BrokenImage>
              <svg width="16" height="16" viewBox="0 0 16 16">
                <path d="M.5 .5h10l5 5v10H.5z" fill="#c5d8f7" stroke="#999" />
                <path d="M10.500 .5v5h5z" fill="#fff" stroke="#999" />
                <path d="M2 4q2-3 4 0h1v2H2z" fill="#fff" />
                <path d="M1 15l5-5h4l-5 5z" fill="#4ca52e" />
                <path d="M5 16l11-9v9z" fill="#fff" />
              </svg>
              <span>logo</span>
            </BrokenImage>
            <Navbar>
              <Brand>ADTP</Brand>
              <NavLink>About</NavLink>
              <NavLink $active>Academics</NavLink>
              <NavLink>Admissions</NavLink>
              <NavLink>Student Committee</NavLink>
              <NavLink>Alumni</NavLink>
              <NavLink>Apply Now</NavLink>
              <SearchForm>
                <SearchInput>Search</SearchInput>
                <SubmitButton>SUBMIT</SubmitButton>
              </SearchForm>
            </Navbar>
            <Title>Science/Engineering Major</Title>
            <Subtitle>ADTP Study Plan</Subtitle>
            <Lines $mt={11}>{intro}</Lines>
            <Panel $h={349} $mb={4}>
              <PanelHead>Proficiency courses</PanelHead>
              <PanelBody>
                <Table>
                  <tbody>
                    {courses.map(([code, name]) => (
                      <tr key={code}><td>{code}</td><td>{name}</td></tr>
                    ))}
                  </tbody>
                </Table>
                <Note>*Complete selected Proficiencies with at least a “C” grade.</Note>
              </PanelBody>
            </Panel>
            <Panel $h={400} $mb={0}>
              <PanelHead>Liberal Arts Courses / General Education Requirements</PanelHead>
              <PanelBody>
                <Lead>{lead}</Lead>
                <Lines $mt={0}>{areas}</Lines>
              </PanelBody>
            </Panel>
          </Container>
        </Page>
        <VScroll>
          <Arrow $m="7px 0 6px" width="7" height="4"><path d="M0 4L3.500 0 7 4z" fill="#a0a0a0" /></Arrow>
          <VThumb />
          <Arrow $m="0 0 7px" width="7" height="4"><path d="M0 0h7L3.500 4z" fill="#505050" /></Arrow>
        </VScroll>
      </ViewRow>
      <HScroll>
        <Arrow $m="0 7px 0 6px" width="4" height="7"><path d="M4 0v7L0 3.500z" fill="#a0a0a0" /></Arrow>
        <HThumb />
        <Arrow $m="0 24px 0 auto" width="4" height="7"><path d="M0 0v7l4-3.500z" fill="#505050" /></Arrow>
      </HScroll>

      <Taskbar>
        <Scene />
        <Start><StartOrb /></Start>
        <Slot $shift={6}><Balls /></Slot>
        <Slot $open $bright><Explorer /></Slot>
        <Slot><AdobeTile $edge="#74b7f4" $bg="#0c0a54" $fg="#80c0f5">Ps</AdobeTile></Slot>
        <Slot><AdobeTile $edge="#f59c2f" $bg="#261405" $fg="#f8a848">Ai</AdobeTile></Slot>
        <Slot><GIcon /></Slot>
        <Slot $open><Paint /></Slot>
        <Slot $open $bright><ChromeIcon /></Slot>
        <Slot><Calculator /></Slot>
        <Slot $open><Office letter="N" /></Slot>
        <Slot $open><Office letter="O" /></Slot>
        <Slot $open><Office letter="W" /></Slot>
        <Slot><Office letter="P" /></Slot>
        <Slot><Office letter="X" /></Slot>
        <Slot><Snip /></Slot>
        <Slot><Notepad /></Slot>
        <Slot $open><VSCode /></Slot>
        <Slot $open><GitHub /></Slot>
        <Slot $shift={2}><Acrobat /></Slot>
        <Slot $open $bright><BingDesktop /></Slot>
        <Tray>
          <Lang>CH</Lang>
          <TrayIcon $mr={8} $mb={4} width="15" height="15" viewBox="0 0 15 15">
            <path d="M2 5q3-3 5-2t6-3" fill="none" stroke="#ccc" />
            <rect x=".5" y="6.500" width="14" height="8" rx="1" fill="#888" stroke="#ddd" />
            <path d="M2 9h11M2 11h11" stroke="#fff" strokeDasharray="1 1" /><path d="M4 13h7" stroke="#fff" />
          </TrayIcon>
          <TrayIcon $mr={12} $mb={4} width="16" height="16" viewBox="0 0 16 16">
            <circle cx="8" cy="8" r="7.300" fill="#1216c4" stroke="#bbc" strokeWidth="1.200" />
            <text x="8" y="12.500" textAnchor="middle" fontFamily="DejaVu Sans" fontWeight="bold" fontSize="12" fill="#fff">?</text>
          </TrayIcon>
          <TrayIcon $mr={11} $mb={4} width="8" height="16" viewBox="0 0 8 16">
            <path d="M2 2V.5h6v4H6M0 2.500h5v3H0z" fill="none" stroke="#fff" /><path d="M1 13h6l-3 3z" fill="#fff" />
          </TrayIcon>
          <TrayIcon $mr={13} width="8" height="5" viewBox="0 0 8 5"><path d="M0 5l4-4 4 4z" fill="#fff" /></TrayIcon>
          <TrayIcon $mr={9} width="15" height="15" viewBox="0 0 15 15">
            <path d="M0 2l6-.8V7H0zM7 1l8-1v7H7zM0 8h6v5.800L0 13zM7 8h8v7l-8-1z" fill="#fff" />
          </TrayIcon>
          <TrayIcon $mr={9} width="16" height="16" viewBox="0 0 16 16">
            <circle cx="8" cy="8" r="7.800" fill="#ffd91c" /><path d="M4 1.500A8 8 0 0 1 15 5L5 4 1 11Q-1 5 4 1.500z" fill="#4ab51c" />
            <path d="M8 4v8M4 8h8" stroke="#0c6b1a" strokeWidth="2.500" />
          </TrayIcon>
          <TrayIcon $mr={10} width="14" height="15" viewBox="0 0 14 15"><path d="M1 0v15" stroke="#fff" strokeWidth="1.500" /><path d="M2.500 1h5.500v2h6l-2 3 1 2.500H7.500V7.500h-5z" fill="#fff" /></TrayIcon>
          <TrayIcon $mr={10} width="15" height="15" viewBox="0 0 15 15">
            <path d="M5 3.500h9.500v8.500H4M6 14.500h8M2.500 7v7M1 0v3M4 0v3" fill="none" stroke="#fff" strokeWidth="1.400" /><path d="M0 3h5v3H0z" fill="#fff" />
          </TrayIcon>
          <TrayIcon $mr={17} width="13" height="14" viewBox="0 0 13 14"><path d="M0 4h3l4-4v14l-4-4H0z" fill="#fff" /><path d="M9 4.500q2 2.500 0 5M11 3q3 4 0 8" fill="none" stroke="#ddd" /></TrayIcon>
          <Clock>5:38 PM<br />8/10/2015</Clock>
          <ShowDesktop />
        </Tray>
      </Taskbar>
      <SpeedBall>73</SpeedBall>
    </Desktop>
  );
}
